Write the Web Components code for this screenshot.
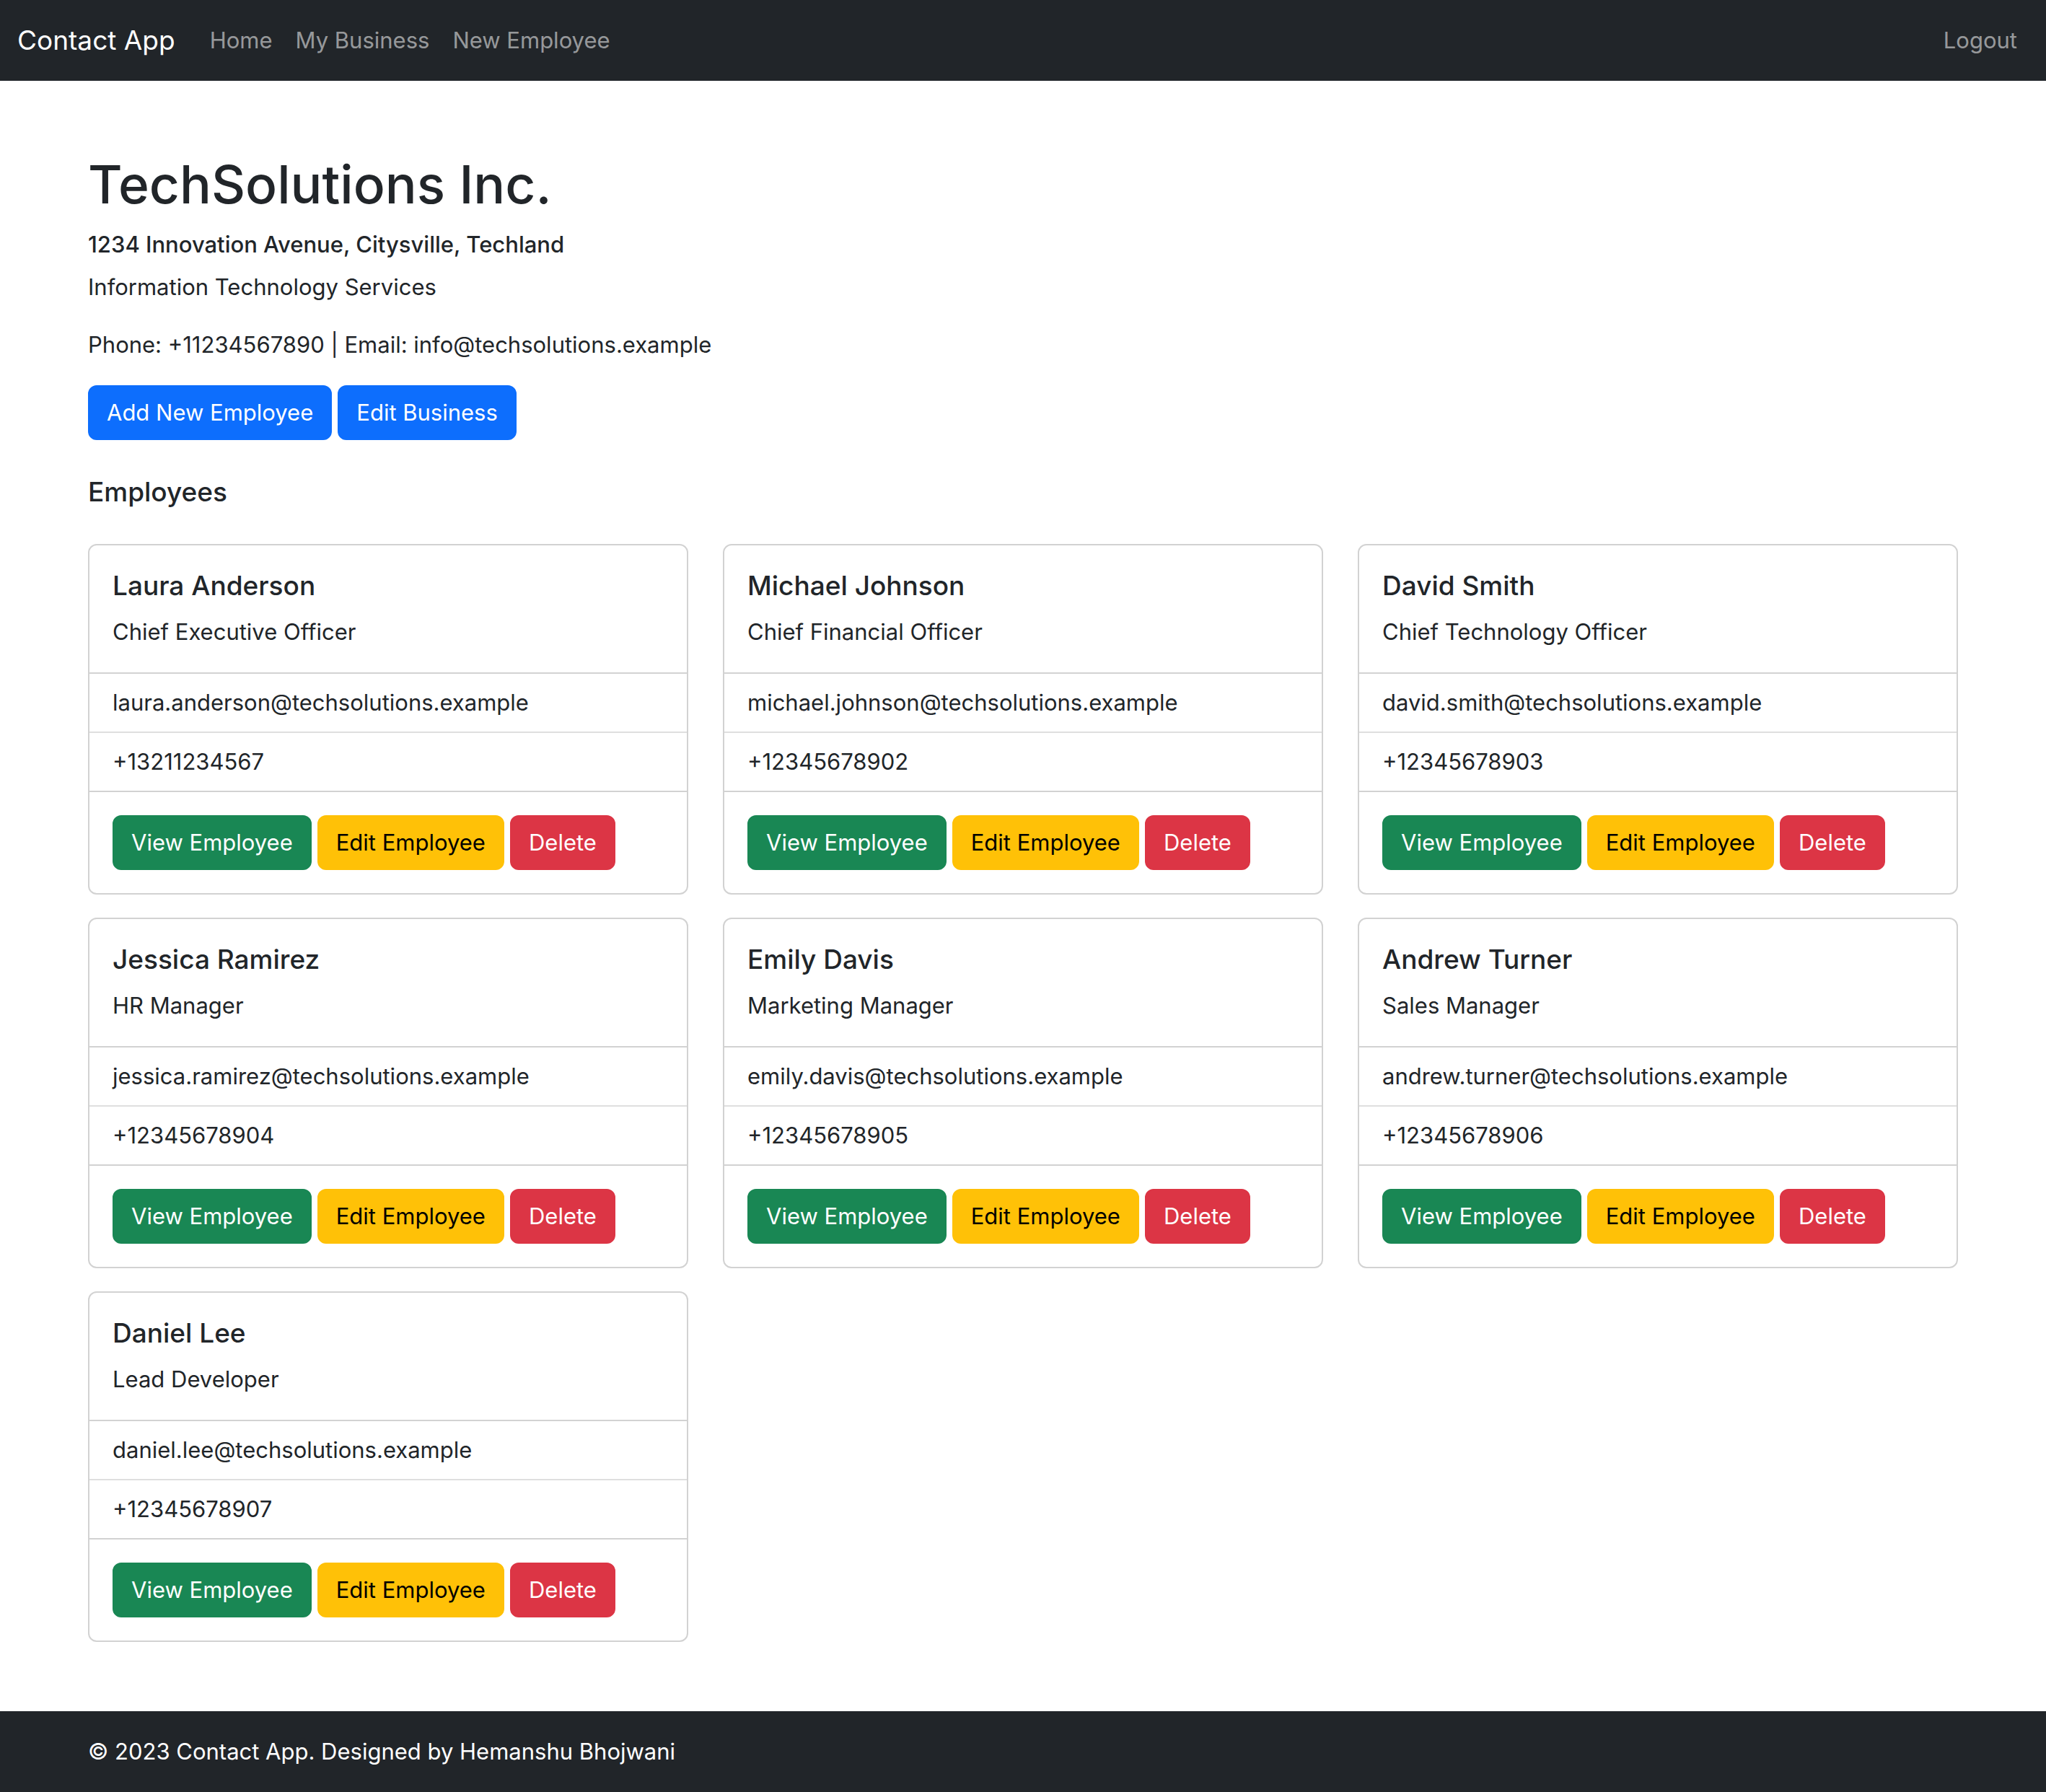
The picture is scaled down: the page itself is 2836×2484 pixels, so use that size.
<!DOCTYPE html>
<html lang="en">
<head>
<meta charset="utf-8">
<title>Contact App</title>
<style>
  :root {
    --ink: #212529;
    --text: 31px;
    --title: 37px;
    --display: 73px;
    --gutter: max(24px, calc((100% - 2592px) / 2));
  }
  body {
    margin: 0;
    background: #fff;
    color: var(--ink);
    font: 400 var(--text)/48px Inter, "Liberation Sans", sans-serif;
  }
</style>
</head>
<body>
<contact-app></contact-app>
<script>
const base = `
  :host { display: block; }
  *, *::before, *::after { box-sizing: border-box; }
  h1, h2, h3, p, ul { margin: 0; padding: 0; }
  ul { list-style: none; }
`;

class AppElement extends HTMLElement {
  connectedCallback() {
    if (this.shadowRoot) return;
    const root = this.attachShadow({ mode: "open" });
    root.innerHTML = `<style>${base}${this.styles}</style>${this.render()}`;
  }
}

customElements.define("app-button", class extends AppElement {
  get styles() {
    return `
      :host { display: inline-block; --bg: #0d6efd; --fg: #fff; }
      :host([tone="success"]) { --bg: #198754; }
      :host([tone="warning"]) { --bg: #ffc107; --fg: #000; }
      :host([tone="danger"]) { --bg: #dc3545; }
      a, button {
        display: block; margin: 0; padding: 12px 24px;
        border: 2px solid var(--bg); border-radius: 12px;
        background: var(--bg); color: var(--fg);
        font: inherit; text-decoration: none; white-space: nowrap; cursor: pointer;
      }`;
  }
  render() {
    const href = this.getAttribute("href");
    return href ? `<a href="${href}"><slot></slot></a>` : `<button type="button"><slot></slot></button>`;
  }
});

customElements.define("nav-bar", class extends AppElement {
  get styles() {
    return `
      nav { display: flex; align-items: center; min-height: 112px; padding: 16px 24px; background: #212529; }
      a { text-decoration: none; white-space: nowrap; }
      .brand { margin-right: 32px; color: #fff; font-size: var(--title); line-height: 60px; }
      ul { display: flex; }
      ul a { display: block; padding: 16px; color: rgba(255, 255, 255, .55); }
      .end { margin-left: auto; }`;
  }
  render() {
    return `
      <nav>
        <a class="brand" href="#">Contact App</a>
        <ul>
          <li><a href="#home">Home</a></li>
          <li><a href="#business">My Business</a></li>
          <li><a href="#new">New Employee</a></li>
        </ul>
        <ul class="end"><li><a href="#logout">Logout</a></li></ul>
      </nav>`;
  }
});

customElements.define("business-header", class extends AppElement {
  get styles() {
    return `
      h1 { margin-bottom: 16px; font-size: var(--display); font-weight: 500; line-height: 96px; }
      h2 { margin-bottom: 16px; font-size: var(--text); font-weight: 500; line-height: 38px; }
      p { margin-bottom: 32px; }
      .actions { display: flex; flex-wrap: wrap; gap: 8px; }`;
  }
  render() {
    return `
      <h1><slot name="name"></slot></h1>
      <h2><slot name="address"></slot></h2>
      <p><slot name="industry"></slot></p>
      <p><slot name="contact"></slot></p>
      <div class="actions"><slot></slot></div>`;
  }
});

customElements.define("employee-card", class extends AppElement {
  get styles() {
    return `
      article { border: 2px solid #d2d2d2; border-radius: 12px; background: #fff; }
      header, footer { padding: 32px; }
      h3 { margin-bottom: 16px; font-size: var(--title); font-weight: 500; line-height: 48px; }
      ul { border: solid #d2d2d2; border-width: 2px 0; }
      li { padding: 16px 32px; }
      li + li { border-top: 2px solid #dfdfdf; }
      footer { display: flex; flex-wrap: wrap; gap: 8px; }`;
  }
  render() {
    return `
      <article>
        <header>
          <h3><slot name="name"></slot></h3>
          <p><slot name="role"></slot></p>
        </header>
        <ul>
          <li><slot name="email"></slot></li>
          <li><slot name="phone"></slot></li>
        </ul>
        <footer>
          <app-button tone="success" href="#view">View Employee</app-button>
          <app-button tone="warning" href="#edit">Edit Employee</app-button>
          <app-button tone="danger">Delete</app-button>
        </footer>
      </article>`;
  }
});

customElements.define("employee-list", class extends AppElement {
  get styles() {
    return `
      h2 { margin-bottom: 48px; font-size: var(--title); font-weight: 500; line-height: 48px; }
      .grid { display: grid; grid-template-columns: repeat(auto-fill, minmax(760px, 1fr)); gap: 32px 48px; }`;
  }
  render() {
    return `<h2>Employees</h2><div class="grid"><slot></slot></div>`;
  }
});

customElements.define("page-footer", class extends AppElement {
  get styles() {
    return `footer { padding: 32px var(--gutter); background: #212529; color: #fff; }`;
  }
  render() { return `<footer><p><slot></slot></p></footer>`; }
});

const employees = [
  ["Laura Anderson", "Chief Executive Officer", "laura.anderson", "+13211234567"],
  ["Michael Johnson", "Chief Financial Officer", "michael.johnson", "+12345678902"],
  ["David Smith", "Chief Technology Officer", "david.smith", "+12345678903"],
  ["Jessica Ramirez", "HR Manager", "jessica.ramirez", "+12345678904"],
  ["Emily Davis", "Marketing Manager", "emily.davis", "+12345678905"],
  ["Andrew Turner", "Sales Manager", "andrew.turner", "+12345678906"],
  ["Daniel Lee", "Lead Developer", "daniel.lee", "+12345678907"]
];

customElements.define("contact-app", class extends AppElement {
  get styles() {
    return `
      main { padding: 96px var(--gutter); }
      employee-list { margin-top: 48px; }`;
  }
  render() {
    const cards = employees.map(([name, role, user, phone]) => `
      <employee-card>
        <span slot="name">${name}</span>
        <span slot="role">${role}</span>
        <span slot="email">${user}@techsolutions.example</span>
        <span slot="phone">${phone}</span>
      </employee-card>`).join("");
    return `
      <nav-bar></nav-bar>
      <main>
        <business-header>
          <span slot="name">TechSolutions Inc.</span>
          <span slot="address">1234 Innovation Avenue, Citysville, Techland</span>
          <span slot="industry">Information Technology Services</span>
          <span slot="contact">Phone: +11234567890 | Email: info@techsolutions.example</span>
          <app-button href="#new">Add New Employee</app-button>
          <app-button href="#edit-business">Edit Business</app-button>
        </business-header>
        <employee-list>${cards}</employee-list>
      </main>
      <page-footer>© 2023 Contact App. Designed by Hemanshu Bhojwani</page-footer>`;
  }
});
</script>
</body>
</html>
